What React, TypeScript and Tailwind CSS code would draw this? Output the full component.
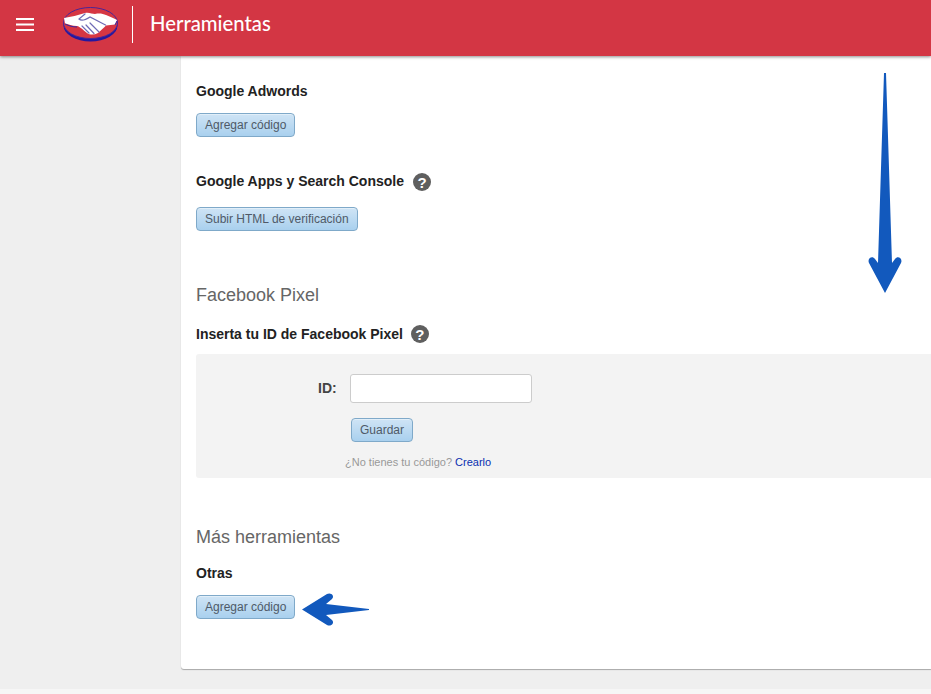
import React from 'react';

const Logo = () => (
  <svg width="57" height="38" viewBox="0 0 57 38" className="shrink-0">
    <ellipse cx="28.5" cy="19.5" rx="27" ry="16" fill="#2418a0" />
    <ellipse cx="28.5" cy="17" rx="27" ry="15.5" fill="#d63643" stroke="#4a2596" strokeWidth="1" />
    <path d="M2 12 C9 11 16 9 23 7 C27 6 30 8 33 8 C38 7 41 8 44 9 C48 11 52 12 55 14 L53 18.5 L44 19.5 C42 22 39 24 36 27 C32 29 28 29 25 27 C21 24 18 20.5 15 20 C10 20 6 18 3 17.5 Z" fill="#fff" />
    <path d="M23 8 L17 13 C20 16 25 13 28 11 L43.5 19 M28 17 L37 26 M24 19 L32 27.5 M20 20 L27 27" fill="none" stroke="#6f6bb5" strokeWidth="1.2" strokeLinecap="round" />
    <path d="M3 18 C7 20 11 21 15 21 M55 15 L53 19" fill="none" stroke="#3a2aa0" strokeWidth="1" />
  </svg>
);

const MenuIcon = () => (
  <svg width="18" height="14" viewBox="0 0 18 14" className="shrink-0">
    <path d="M0 1h18M0 6.5h18M0 12h18" stroke="#fff" strokeWidth="2" />
  </svg>
);

const Help = () => (
  <span className="mt-[2px] flex h-[18px] w-[18px] shrink-0 items-center justify-center rounded-full bg-[#5f5f5f] font-['Liberation_Sans',sans-serif] text-[15px] leading-none font-bold text-white">
    ?
  </span>
);

const Btn = ({ children }: { children: React.ReactNode }) => (
  <button className="block h-6 rounded-[4px] border border-[#7fa9c9] bg-gradient-to-b from-[#cfe4f5] to-[#a9d0ee] px-2 text-[12px] leading-none text-[#4f5a68] shadow-[inset_0_1px_0_rgba(255,255,255,0.4)]">
    {children}
  </button>
);

const Label = ({ children }: { children: React.ReactNode }) => (
  <h3 className="text-[14px] leading-5 font-bold text-[#222]">{children}</h3>
);

const Section = ({ children }: { children: React.ReactNode }) => (
  <h2 className="text-[18px] leading-6 text-[#666]">{children}</h2>
);

export default function App() {
  return (
    <div className="flex h-[694px] w-[931px] flex-col overflow-hidden bg-[#efefef] font-['Liberation_Sans',Arial,sans-serif]">
      <header className="relative z-10 flex h-14 shrink-0 items-center bg-[#d33644] shadow-[0_1px_3px_rgba(0,0,0,0.45)]">
        <div className="mt-[-7px] ml-4">
          <MenuIcon />
        </div>
        <div className="mt-[-6px] ml-7">
          <Logo />
        </div>
        <span className="mt-[-7px] ml-[13px] h-[37px] w-px bg-white" />
        <span className="mt-[-9px] ml-[17px] font-['Lato',sans-serif] text-[20.3px] font-medium text-white">Herramientas</span>
      </header>

      <div className="flex flex-1 flex-col">
        <main className="relative ml-[181px] h-[613px] rounded-bl-[3px] bg-white pt-[25px] pl-[15px] shadow-[0_1px_1px_rgba(0,0,0,0.3)]">
          <Label>Google Adwords</Label>
          <div className="mt-[12px]">
            <Btn>Agregar código</Btn>
          </div>

          <div className="mt-[34px] flex items-center gap-[9px]">
            <Label>Google Apps y Search Console</Label>
            <Help />
          </div>
          <div className="mt-[16px]">
            <Btn>Subir HTML de verificación</Btn>
          </div>

          <div className="mt-[52px]">
            <Section>Facebook Pixel</Section>
          </div>
          <div className="mt-[17px] flex items-center gap-2">
            <Label>Inserta tu ID de Facebook Pixel</Label>
            <div className="-mt-[2px]">
              <Help />
            </div>
          </div>

          <div className="mt-[10px] h-[124px] rounded-l-[3px] bg-[#f3f3f3] pt-5 pl-[122px]">
            <div className="flex items-center">
              <label className="text-[14px] font-bold text-[#444]">ID:</label>
              <input className="ml-[13px] h-[29px] w-[182px] rounded-[3px] border border-[#ccc] bg-white" />
            </div>
            <div className="mt-[15px] ml-[33px]">
              <Btn>Guardar</Btn>
            </div>
            <p className="mt-[14px] ml-[27px] text-[11px] leading-[12px] text-[#999]">
              ¿No tienes tu código? <a className="text-[#0a2fb0]">Crearlo</a>
            </p>
          </div>

          <div className="mt-[47px]">
            <Section>Más herramientas</Section>
          </div>
          <div className="mt-[14px]">
            <Label>Otras</Label>
          </div>
          <div className="mt-[12px]">
            <Btn>Agregar código</Btn>
          </div>

          {/* annotation arrows */}
          <svg className="absolute top-[17px] left-[686px]" width="36" height="222" viewBox="0 0 36 222">
            <path d="M17 0 H19 L25 190 L28 186 C31 182 36 186 34 190 L18 220 L2 190 C0 186 5 182 8 186 L11 190 Z" fill="#1259bd" />
          </svg>
          <svg className="absolute top-[535px] left-[119px]" width="70" height="36" viewBox="0 0 70 36">
            <path d="M69 18 V19 L26 24 L32 29 C35 32 31 36 27 34 L2 18.5 L27 3 C31 1 35 5 32 8 L26 13 Z" fill="#1259bd" />
          </svg>
        </main>
        <div className="mt-[20px] flex-1 bg-[#f6f6f6]" />
      </div>
    </div>
  );
}
